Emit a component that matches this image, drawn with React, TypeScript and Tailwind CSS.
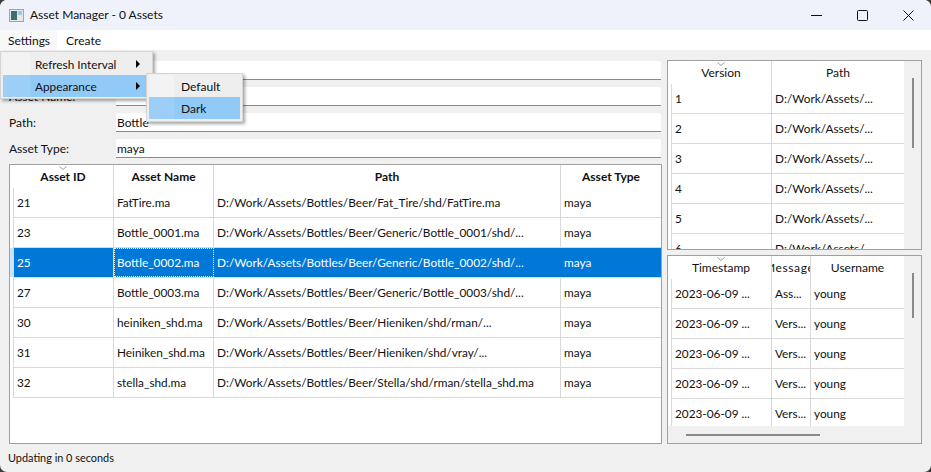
const assets = [
  ['21', 'FatTire.ma', 'D:/Work/Assets/Bottles/Beer/Fat_Tire/shd/FatTire.ma'],
  ['23', 'Bottle_0001.ma', 'D:/Work/Assets/Bottles/Beer/Generic/Bottle_0001/shd/...'],
  ['25', 'Bottle_0002.ma', 'D:/Work/Assets/Bottles/Beer/Generic/Bottle_0002/shd/...'],
  ['27', 'Bottle_0003.ma', 'D:/Work/Assets/Bottles/Beer/Generic/Bottle_0003/shd/...'],
  ['30', 'heiniken_shd.ma', 'D:/Work/Assets/Bottles/Beer/Hieniken/shd/rman/...'],
  ['31', 'Heiniken_shd.ma', 'D:/Work/Assets/Bottles/Beer/Hieniken/shd/vray/...'],
  ['32', 'stella_shd.ma', 'D:/Work/Assets/Bottles/Beer/Stella/shd/rman/stella_shd.ma'],
];

const fields = [
  ['Asset ID:', ''],
  ['Asset Name:', ''],
  ['Path:', 'Bottle'],
  ['Asset Type:', 'maya'],
];

const history = ['Ass...', 'Vers...', 'Vers...', 'Vers...', 'Vers...'];

function SortMark() {
  return (
    <svg width="8" height="4" viewBox="0 0 8 4" className="absolute left-1/2 top-[1px] -translate-x-1/2" fill="none" stroke="#9a9a9a">
      <path d="M0.5 0.5 L4 3.5 L7.5 0.5" />
    </svg>
  );
}

function Arrow() {
  return <span className="ml-auto mr-[10px] w-0 h-0 border-y-[4px] border-y-transparent border-l-[4px] border-l-black" />;
}

export default function App() {
  return (
    <div className="w-[931px] h-[472px] bg-[#3c3c3c]">
      <div className="relative w-[931px] h-[472px] rounded-[7px] flex flex-col overflow-hidden bg-[#f0f0f0] text-[12px] text-[#111] font-['Lato','Open_Sans',sans-serif]">
        {/* title bar */}
        <div className="h-[30px] shrink-0 flex items-center bg-[#eff2fa] pl-[9px]">
          <svg width="15" height="13" viewBox="0 0 15 13" className="mr-[6px]">
            <rect x="0.5" y="0.5" width="14" height="12" fill="#e4e8ea" stroke="#9aa7ae" />
            <rect x="2" y="2" width="6" height="9" fill="#3d6d70" />
            <rect x="9" y="2" width="4" height="4" fill="#a8c4d8" />
          </svg>
          <span>Asset Manager - 0 Assets</span>
          <div className="ml-auto flex items-center text-[#111]">
            <div className="w-[46px] flex justify-center">
              <svg width="11" height="11" viewBox="0 0 11 11" stroke="currentColor" fill="none"><path d="M0 5.5 H11" /></svg>
            </div>
            <div className="w-[46px] flex justify-center">
              <svg width="11" height="11" viewBox="0 0 11 11" stroke="currentColor" fill="none"><rect x="0.5" y="0.5" width="10" height="10" rx="1" /></svg>
            </div>
            <div className="w-[46px] flex justify-center">
              <svg width="11" height="11" viewBox="0 0 11 11" stroke="currentColor" fill="none"><path d="M0.5 0.5 L10.5 10.5 M10.5 0.5 L0.5 10.5" /></svg>
            </div>
          </div>
        </div>

        {/* menu bar */}
        <div className="h-[20px] shrink-0 flex items-center bg-white">
          <span className="h-full flex items-center pl-[8px] pr-[7px] pt-[2px] bg-[#f8f8f8]">Settings</span>
          <span className="pl-[9px] pt-[2px]">Create</span>
        </div>

        {/* body */}
        <div className="flex-1 flex gap-[5px] pl-[9px] pr-[9px] pt-[10px] min-h-0">
          <div className="w-[653px] flex flex-col">
            <div className="flex flex-col gap-[7px] mb-[6px] pt-[1px] pr-[1px]">
              {fields.map(([label, value]) => (
                <div key={label} className="h-[19px] flex items-center">
                  <span className="w-[107px]">{label}</span>
                  <div className="flex-1 h-[19px] rounded-t-[2px] bg-white border-b border-[#8a8a8a] leading-[19px] pl-[1px]">{value}</div>
                </div>
              ))}
            </div>

            <div className="h-[280px] bg-white border border-[#a0a0a0] pl-[3px]">
              <div className="flex h-[23px] font-bold text-center leading-[24px]">
                <div className="relative w-[101px] border-r border-[#d9d9d9]">Asset ID<SortMark /></div>
                <div className="w-[100px] border-r border-[#d9d9d9]">Asset Name</div>
                <div className="w-[347px] border-r border-[#d9d9d9]">Path</div>
                <div className="w-[100px]">Asset Type</div>
              </div>
              {assets.map(([id, name, path]) => {
                const selected = id === '25';
                return (
                  <div key={id} className={`relative flex h-[30px] leading-[29px] text-[11.8px] border-b border-[#d9d9d9] ${selected ? 'bg-[#0078d7] text-white' : ''}`}>
                    {selected && <div className="absolute left-[-3px] top-0 w-[3px] h-[29px] bg-[#cce4f7]" />}
                    <div className="w-[101px] pl-[3px] border-l border-r border-[#d9d9d9]">{id}</div>
                    <div className={`w-[100px] whitespace-nowrap overflow-hidden ${selected ? 'border border-dotted border-white leading-[27px] pl-[2px]' : 'pl-[3px] border-r border-[#d9d9d9]'}`}>{name}</div>
                    <div className={`w-[347px] pl-[3px] whitespace-nowrap overflow-hidden border-r ${selected ? 'border-[#0078d7]' : 'border-[#d9d9d9]'}`}>{path}</div>
                    <div className="w-[99px] pl-[3px]">maya</div>
                  </div>
                );
              })}
            </div>
          </div>

          <div className="w-[255px] flex flex-col gap-[5px]">
            {/* versions */}
            <div className="h-[190px] overflow-hidden flex bg-white border border-[#a0a0a0] pl-[3px]">
              <div className="w-[233px]">
                <div className="relative flex h-[23px] text-center leading-[24px]">
                  <div className="relative w-[101px] border-r border-[#d9d9d9]">Version<SortMark /></div>
                  <div className="w-[132px]">Path</div>
                </div>
                {['1', '2', '3', '4', '5', '6'].map((version) => (
                  <div key={version} className="flex h-[30px] leading-[29px] text-[11.8px] border-b border-[#d9d9d9]">
                    <div className="w-[101px] pl-[3px] border-l border-r border-[#d9d9d9]">{version}</div>
                    <div className="w-[132px] pl-[3px]">D:/Work/Assets/...</div>
                  </div>
                ))}
              </div>
              <div className="flex-1 bg-[#f0f0f0] flex justify-center pt-[17px]">
                <div className="w-[2px] h-[70px] bg-[#8a8a8a]" />
              </div>
            </div>

            {/* history */}
            <div className="h-[189px] overflow-hidden flex flex-col bg-white border border-[#a0a0a0]">
              <div className="flex-1 flex min-h-0 pl-[3px]">
                <div className="w-[233px]">
                  <div className="flex h-[23px] text-center leading-[24px]">
                    <div className="relative w-[101px] border-r border-[#d9d9d9]">Timestamp<SortMark /></div>
                    <div className="w-[39px] border-r border-[#d9d9d9] overflow-hidden flex justify-start">
                      <span className="-ml-[8px] tracking-[0.6px]">Message</span>
                    </div>
                    <div className="w-[93px]">Username</div>
                  </div>
                  {history.map((message, i) => (
                    <div key={i} className="flex h-[30px] leading-[29px] text-[11.8px] border-b border-[#d9d9d9]">
                      <div className="w-[101px] pl-[3px] border-l border-r border-[#d9d9d9]">2023-06-09 ...</div>
                      <div className="w-[39px] pl-[3px] border-r border-[#d9d9d9] whitespace-nowrap overflow-hidden">{message}</div>
                      <div className="w-[93px] pl-[3px]">young</div>
                    </div>
                  ))}
                </div>
                <div className="flex-1 bg-[#f0f0f0] flex justify-center pt-[17px]">
                  <div className="w-[2px] h-[45px] bg-[#8a8a8a]" />
                </div>
              </div>
              <div className="h-[17px] shrink-0 bg-[#f0f0f0] pl-[18px] pt-[8px]">
                <div className="w-[134px] h-[2px] bg-[#8a8a8a]" />
              </div>
            </div>
          </div>
        </div>

        {/* status bar */}
        <div className="h-[28px] shrink-0 flex items-center pl-[8px] text-[10.9px]">Updating in 0 seconds</div>

        {/* open menus */}
        <div className="absolute left-0 top-[51px] w-[153px] h-[48px] bg-[#eeeeee] border border-[#d5d5d5] shadow-[2px_2px_3px_rgba(0,0,0,0.35)] py-[1px] px-[2px] text-[11.8px]">
          <div className="flex h-[22px] items-center">
            <span className="w-[27px] self-stretch bg-white/30" />
            <span className="pl-[5px] pt-[1px]">Refresh Interval</span>
            <Arrow />
          </div>
          <div className="flex h-[22px] items-center bg-[#91c9f7]">
            <span className="w-[27px] self-stretch bg-white/10" />
            <span className="pl-[5px] pt-[1px]">Appearance</span>
            <Arrow />
          </div>
        </div>
        <div className="absolute left-[146px] top-[73px] w-[97px] h-[49px] bg-[#eeeeee] border border-[#d5d5d5] shadow-[2px_2px_3px_rgba(0,0,0,0.35)] py-[1px] px-[2px]">
          <div className="flex h-[22px] items-center">
            <span className="w-[25px] self-stretch bg-white/30" />
            <span className="pl-[7px] pt-[1px]">Default</span>
          </div>
          <div className="flex h-[22px] items-center bg-[#91c9f7]">
            <span className="w-[25px] self-stretch bg-white/10" />
            <span className="pl-[7px] pt-[1px]">Dark</span>
          </div>
        </div>
      </div>
    </div>
  );
}
